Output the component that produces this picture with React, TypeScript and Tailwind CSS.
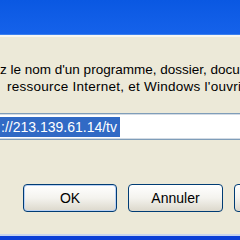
import React from "react";

export default function App() {
  const font = { fontFamily: "'Liberation Sans', Arial, sans-serif" };
  return (
    <div
      className="w-[240px] h-[240px] overflow-hidden flex flex-col bg-[#ece9d8] text-black"
      style={font}
    >
      {/* title bar bottom */}
      <div className="h-[34px] shrink-0 bg-gradient-to-b from-[#0a58e2] to-[#1562ea]" />
      <div className="h-[1px] shrink-0 bg-[#3c80ee]" />
      <div className="h-[2px] shrink-0 bg-[#f7f6f0]" />

      <div className="flex-1 flex flex-col">
        {/* description */}
        <div className="pt-[24px] text-[13.5px] leading-[17px] whitespace-nowrap">
          <div>z le nom d'un programme, dossier, document ou</div>
          <div className="pl-[7px] tracking-[0.25px]">ressource Internet, et Windows l'ouvrira pour vous.</div>
        </div>

        {/* input */}
        <div className="mt-[18px] ml-[-6px] w-[260px] h-[27px] shrink-0 border border-[#7f9db9] bg-white flex items-center pl-[5px]">
          <div className="w-full h-full border-t border-b border-[#d3dbe4] flex items-center">
            <span className="bg-[#316ac5] text-white text-[14px] leading-[20px] h-[20px] pl-[1px] pr-[3px] whitespace-nowrap">
              ://213.139.61.14/tv
            </span>
          </div>
        </div>

        {/* buttons */}
        <div className="mt-[44px] flex gap-[11px] pl-[23px] whitespace-nowrap">
          <button className="w-[94px] h-[28px] shrink-0 rounded-[4px] border border-[#003c74] bg-gradient-to-b from-[#ffffff] via-[#f4f3ee] to-[#dcd8cc] text-[14px] shadow-[inset_0_0_0_1px_#b9d1f4]">
            OK
          </button>
          <button className="w-[95px] h-[28px] shrink-0 rounded-[4px] border border-[#003c74] bg-gradient-to-b from-[#ffffff] via-[#f4f3ee] to-[#dcd8cc] text-[14px]">
            Annuler
          </button>
          <button className="w-[95px] h-[28px] shrink-0 rounded-[4px] border border-[#003c74] bg-gradient-to-b from-[#ffffff] via-[#f4f3ee] to-[#dcd8cc] text-[14px]">
            Parcourir...
          </button>
        </div>

        <div className="flex-1" />
      </div>

      {/* bottom frame */}
      <div className="h-[2px] shrink-0 bg-[#c7d4ee]" />
      <div className="h-[4px] shrink-0 bg-[#0b3fd6]" />
    </div>
  );
}
